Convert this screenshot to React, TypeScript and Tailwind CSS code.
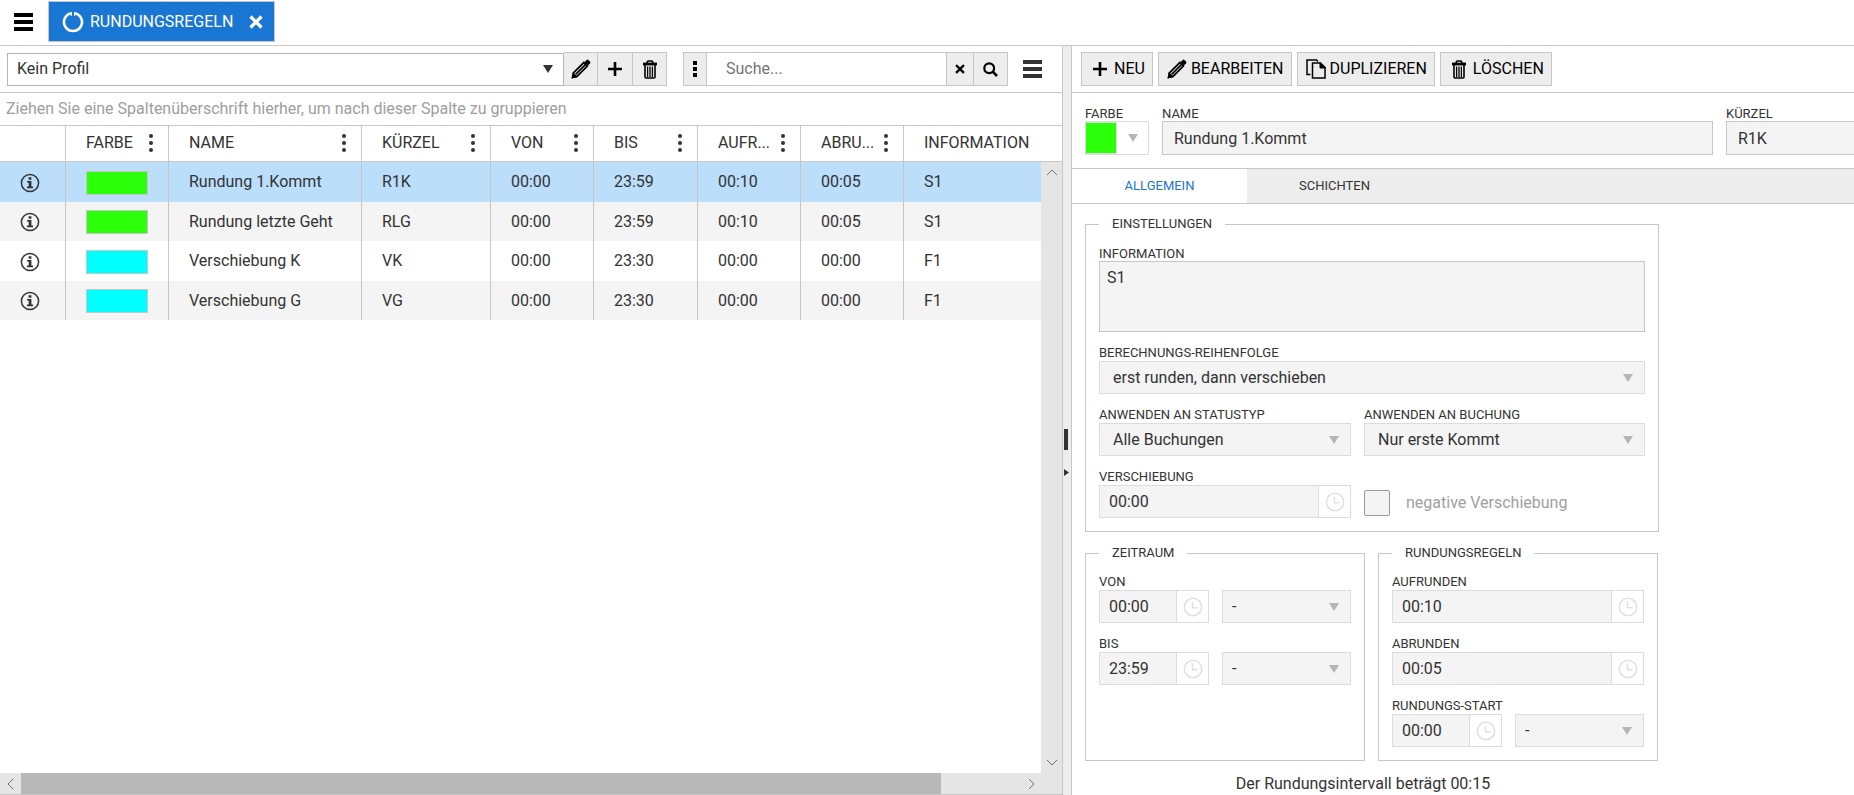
import { useId, useState } from "react";
import type { ReactNode } from "react";

type Rule = {
  color: string;
  name: string;
  short: string;
  from: string;
  to: string;
  up: string;
  down: string;
  info: string;
};

const RULES: Rule[] = [
  { color: "#2bff0a", name: "Rundung 1.Kommt", short: "R1K", from: "00:00", to: "23:59", up: "00:10", down: "00:05", info: "S1" },
  { color: "#2bff0a", name: "Rundung letzte Geht", short: "RLG", from: "00:00", to: "23:59", up: "00:10", down: "00:05", info: "S1" },
  { color: "#00ffff", name: "Verschiebung K", short: "VK", from: "00:00", to: "23:30", up: "00:00", down: "00:00", info: "F1" },
  { color: "#00ffff", name: "Verschiebung G", short: "VG", from: "00:00", to: "23:30", up: "00:00", down: "00:00", info: "F1" },
];

const COLUMNS = [
  { label: "FARBE", width: "w-[103px]" },
  { label: "NAME", width: "w-[193px]" },
  { label: "KÜRZEL", width: "w-[129px]" },
  { label: "VON", width: "w-[103px]" },
  { label: "BIS", width: "w-[104px]" },
  { label: "AUFR...", width: "w-[103px]" },
  { label: "ABRU...", width: "w-[103px]" },
];

const BarsIcon = () => (
  <svg width="19" height="18" viewBox="0 0 19 18" fill="currentColor" aria-hidden="true">
    <path d="M0 0h19v4H0zM0 7h19v4H0zM0 14h19v4H0z" />
  </svg>
);

const RingIcon = () => (
  <svg width="22" height="22" viewBox="0 0 22 22" fill="none" stroke="currentColor" strokeWidth="2.6" aria-hidden="true">
    <path d="M9.4 2.2a9 9 0 1 0 3.2 0" />
    <path d="M9.4 1v4M12.6 1v4" strokeWidth="1" />
  </svg>
);

const CrossIcon = ({ size }: { size: number }) => (
  <svg width={size} height={size} viewBox="0 0 14 14" stroke="currentColor" strokeWidth="3.2" aria-hidden="true">
    <path d="M1.500 1.500l11 11M12.500 1.500l-11 11" />
  </svg>
);

const PencilIcon = () => (
  <svg width="20" height="20" viewBox="0 0 20 20" fill="none" stroke="currentColor" aria-hidden="true">
    <path d="M2.4 13.800L12.800 3.600l3.500 3.500L6 17.400l-4.400 1z" strokeWidth="1.800" />
    <path d="M4.600 15.400L14.400 5.600" strokeWidth="1.600" />
    <path d="M.6 19.400l1.400-6.200 4.800 4.800z" fill="currentColor" stroke="none" />
    <path d="M13.400 3.200L15.600 1a1.300 1.300 0 0 1 1.800 0L19 2.600a1.300 1.300 0 0 1 0 1.800l-2.200 2.200z" fill="currentColor" stroke="none" />
  </svg>
);

const PlusIcon = () => (
  <svg width="14" height="14" viewBox="0 0 14 14" stroke="currentColor" strokeWidth="2.600" aria-hidden="true">
    <path d="M7 0v14M0 7h14" />
  </svg>
);

const TrashIcon = () => (
  <svg width="14" height="19" viewBox="0 0 14 19" fill="none" stroke="currentColor" aria-hidden="true">
    <path d="M4.200 3V2.200a1.200 1.200 0 0 1 1.200-1.200h3.200a1.200 1.200 0 0 1 1.200 1.200V3" strokeWidth="1.600" />
    <path d="M0 4h14" strokeWidth="2.800" />
    <path d="M2 5v12a1 1 0 0 0 1 1h8a1 1 0 0 0 1-1V5" strokeWidth="1.600" />
    <path d="M4.600 6.500V17M7 6.500V17M9.400 6.500V17" strokeWidth="1.300" />
  </svg>
);

const CopyIcon = () => (
  <svg width="20" height="20" viewBox="0 0 20 20" fill="none" stroke="currentColor" strokeWidth="1.500" aria-hidden="true">
    <path d="M4.500 15.500H1V1h9.500l1.500 1.500" />
    <path d="M6.500 4h8L19 8.500V19H6.500z" />
    <path d="M14 3.500v5.500h5.500z" fill="currentColor" strokeWidth="1" />
  </svg>
);

const SearchIcon = () => (
  <svg width="15" height="15" viewBox="0 0 15 15" fill="none" stroke="currentColor" aria-hidden="true">
    <circle cx="6.200" cy="6.200" r="4.900" strokeWidth="2.200" />
    <path d="M9.700 9.700l4.300 4.300" strokeWidth="2.600" />
  </svg>
);

const DotsIcon = () => (
  <svg width="4" height="18" viewBox="0 0 4 18" fill="currentColor" aria-hidden="true">
    <circle cx="2" cy="2" r="2" />
    <circle cx="2" cy="9" r="2" />
    <circle cx="2" cy="16" r="2" />
  </svg>
);

const SquareDotsIcon = () => (
  <svg width="4" height="16" viewBox="0 0 4 16" fill="currentColor" aria-hidden="true">
    <path d="M0 0h4v4H0zM0 6h4v4H0zM0 12h4v4H0z" />
  </svg>
);

const InfoIcon = () => (
  <svg width="20" height="20" viewBox="0 0 20 20" fill="none" aria-hidden="true">
    <circle cx="10" cy="10" r="8.600" stroke="currentColor" strokeWidth="1.500" />
    <path d="M8.600 4.200h2.800v2.600H8.600zM7 8h4.400v5.600H13V15.200H7V13.600h1.700V9.500H7z" fill="currentColor" />
  </svg>
);

const ClockIcon = () => (
  <svg width="20" height="20" viewBox="0 0 20 20" fill="none" stroke="currentColor" strokeWidth="1.500" aria-hidden="true">
    <circle cx="10" cy="10" r="8.700" />
    <path d="M9.500 4.500v6.200h5" />
  </svg>
);

const DownIcon = () => (
  <svg width="10" height="8" viewBox="0 0 10 8" fill="currentColor" aria-hidden="true">
    <path d="M0 0h10L5 8z" />
  </svg>
);

function Chevron({ d }: { d: string }) {
  return (
    <svg width="12" height="12" viewBox="0 0 12 12" fill="none" stroke="#707070" strokeWidth="1" aria-hidden="true">
      <path d={d} />
    </svg>
  );
}

function ToolButton({ label, icon, onClick }: { label: string; icon: ReactNode; onClick?: () => void }) {
  return (
    <button type="button" onClick={onClick} className="flex h-[34px] items-center gap-1 border border-[#c6c6c6] bg-[#ededed] pr-[7px] pl-2 text-black">
      <span className="flex w-5 justify-center">{icon}</span>
      {label}
    </button>
  );
}

function Field({ label, id, className = "", children }: { label: string; id: string; className?: string; children: ReactNode }) {
  return (
    <div className={className}>
      <label htmlFor={id} className="block text-[13px] leading-[14px] whitespace-nowrap">{label}</label>
      {children}
    </div>
  );
}

function Dropdown({ id, options, label, className = "pl-[13px]" }: { id?: string; options: string[]; label?: string; className?: string }) {
  return (
    <div className="relative mt-px flex-1">
      <select id={id} aria-label={label} className={`block h-[33px] w-full appearance-none border border-[#dcdcdc] bg-[#f4f4f4] pr-8 ${className}`}>
        {options.map((o) => (
          <option key={o}>{o}</option>
        ))}
      </select>
      <span className="pointer-events-none absolute inset-y-0 right-3 flex items-center text-[#b5b5b5]">
        <DownIcon />
      </span>
    </div>
  );
}

function TimeInput({ id, value, className = "w-full" }: { id: string; value: string; className?: string }) {
  return (
    <div className={`mt-px flex h-[33px] shrink-0 border border-[#dcdcdc] ${className}`}>
      <input id={id} defaultValue={value} className="min-w-0 flex-1 bg-[#f4f4f4] pl-[9px]" />
      <button type="button" aria-label="Uhrzeit wählen" className="flex w-8 items-center justify-center border-l border-[#dcdcdc] bg-white text-[#e0e0e0]">
        <ClockIcon />
      </button>
    </div>
  );
}

function TimeField({ label, value }: { label: string; value: string }) {
  const id = useId();
  return (
    <Field label={label} id={id}>
      <TimeInput id={id} value={value} />
    </Field>
  );
}

function TimeWithDay({ label, value }: { label: string; value: string }) {
  const id = useId();
  return (
    <Field label={label} id={id}>
      <div className="flex gap-[13px]">
        <TimeInput id={id} value={value} className="w-[110px]" />
        <Dropdown label={`${label} Tag`} options={["-"]} className="pl-[9px]" />
      </div>
    </Field>
  );
}

function Group({ title, className = "pt-[13px]", children }: { title: string; className?: string; children: ReactNode }) {
  return (
    <fieldset className={`border border-[#c6c6c6] px-[13px] pb-[13px] ${className}`}>
      <legend className="px-[13px] text-[13px] leading-5">{title}</legend>
      <div className="flex flex-col gap-3.5">{children}</div>
    </fieldset>
  );
}

function ListToolbar() {
  return (
    <div className="flex h-[47px] shrink-0 items-center border-b border-[#c6c6c6] pl-[7px] text-black">
      <div className="relative flex-1">
        <select aria-label="Profil" className="block h-[33px] w-full appearance-none border border-[#b5b5b5] bg-white pl-[9px] text-[#333]">
          <option>Kein Profil</option>
        </select>
        <span className="pointer-events-none absolute inset-y-0 right-[11px] flex items-center text-[#333]">
          <DownIcon />
        </span>
      </div>
      <div className="flex h-[34px] divide-x divide-[#c6c6c6] border border-l-0 border-[#c6c6c6] bg-[#ededed]">
        <button type="button" aria-label="Profil bearbeiten" className="flex w-[34px] items-center justify-center"><PencilIcon /></button>
        <button type="button" aria-label="Profil anlegen" className="flex w-[35px] items-center justify-center"><PlusIcon /></button>
        <button type="button" aria-label="Profil löschen" className="flex w-[33px] items-center justify-center"><TrashIcon /></button>
      </div>
      <div className="ml-4 flex h-[34px] divide-x divide-[#c6c6c6] border border-[#c6c6c6] bg-[#ededed]">
        <button type="button" aria-label="Suchoptionen" className="flex w-[23px] items-center justify-center"><SquareDotsIcon /></button>
        <input aria-label="Suche" placeholder="Suche..." className="w-60 bg-white pl-[19px] placeholder:text-[#757575]" />
        <button type="button" aria-label="Suche leeren" className="flex w-[27px] items-center justify-center"><CrossIcon size={10} /></button>
        <button type="button" aria-label="Suchen" className="flex w-[33px] items-center justify-center"><SearchIcon /></button>
      </div>
      <button type="button" aria-label="Listenmenü" className="mr-5 ml-[15px] text-[#333]"><BarsIcon /></button>
    </div>
  );
}

function RuleTable() {
  const [selected, setSelected] = useState(0);
  return (
    <table className="h-[194px] w-full table-fixed border-separate border-spacing-0 text-left">
      <thead>
        <tr className="h-9">
          <th className="w-[66px] border-r border-b border-[#c6c6c6]" />
          {COLUMNS.map((c) => (
            <th key={c.label} className={`border-r border-b border-[#c6c6c6] pr-[15px] pb-0.5 pl-5 font-normal ${c.width}`}>
              <div className="flex items-center justify-between">
                {c.label}
                <button type="button" aria-label={`${c.label} Menü`}><DotsIcon /></button>
              </div>
            </th>
          ))}
          <th className="border-b border-[#c6c6c6] pb-0.5 pl-5 font-normal">INFORMATION</th>
        </tr>
      </thead>
      <tbody>
        {RULES.map((r, i) => (
          <tr
            key={r.name}
            onClick={() => setSelected(i)}
            className={i === selected ? "bg-[#bbdefb]" : i % 2 ? "bg-[#f4f4f4]" : "bg-white"}
          >
            <td className="border-r border-[#c6c6c6] pt-0.5 pl-5"><InfoIcon /></td>
            <td className="border-r border-[#c6c6c6] pt-0.5 pl-5">
              <div className="h-6 w-[62px] border border-[#c6c6c6]" style={{ backgroundColor: r.color }} />
            </td>
            {[r.name, r.short, r.from, r.to, r.up, r.down].map((v, k) => (
              <td key={k} className="border-r border-[#c6c6c6] pt-px pl-5 whitespace-nowrap">{v}</td>
            ))}
            <td className="pt-px pl-5">{r.info}</td>
          </tr>
        ))}
      </tbody>
    </table>
  );
}

function ListPanel() {
  return (
    <section className="flex min-h-0 flex-col border-r border-b border-[#c6c6c6]">
      <ListToolbar />
      <p className="h-[33px] shrink-0 border-b border-[#c6c6c6] pl-1.5 leading-8 text-[#9e9e9e]">
        Ziehen Sie eine Spaltenüberschrift hierher, um nach dieser Spalte zu gruppieren
      </p>
      <div className="relative min-h-0 flex-1">
        <RuleTable />
        {/* vertical scroll track, lies over the last column below the header */}
        <div className="absolute top-9 right-0 bottom-0 flex w-[21px] flex-col items-center justify-between bg-[#e5e5e5] py-1">
          <Chevron d="M1 9l5-5 5 5" />
          <Chevron d="M1 3l5 5 5-5" />
        </div>
      </div>
      <div className="flex h-[21px] shrink-0 items-center bg-[#e5e5e5]">
        <span className="flex w-[21px] justify-center"><Chevron d="M8 1L3 6l5 5" /></span>
        <div className="h-full w-13/15 bg-[#b8b8b8]" />
        <span className="mr-[25px] ml-auto"><Chevron d="M4 1l5 5-5 5" /></span>
      </div>
    </section>
  );
}

function Splitter() {
  return (
    <div className="flex flex-col items-start justify-center gap-[19px] bg-[#ededed] pt-16 pl-px text-[#333]">
      <div className="h-[21px] w-1 bg-[#333]" />
      <svg width="5" height="7" viewBox="0 0 5 7" fill="currentColor" aria-hidden="true">
        <path d="M0 0l5 3.500L0 7z" />
      </svg>
    </div>
  );
}

function DetailPanel() {
  const [tab, setTab] = useState("ALLGEMEIN");
  return (
    <section className="min-h-0 overflow-hidden border-l border-[#c6c6c6]">
      <div className="flex h-[47px] items-center gap-[5px] border-b border-[#c6c6c6] pl-[9px]">
        <ToolButton label="NEU" icon={<PlusIcon />} />
        <ToolButton label="BEARBEITEN" icon={<PencilIcon />} />
        <ToolButton label="DUPLIZIEREN" icon={<CopyIcon />} />
        <ToolButton label="LÖSCHEN" icon={<TrashIcon />} />
      </div>

      <div className="flex gap-[13px] pt-3.5 pb-[13px] pl-[13px]">
        <Field label="FARBE" id="color" className="w-16 shrink-0">
          <button id="color" type="button" className="flex h-[34px] w-full border border-[#dcdcdc] bg-white">
            <span className="h-full w-[31px] border-y border-r border-[#dcdcdc] bg-[#2bff0a]" />
            <span className="flex h-full flex-1 items-center justify-center text-[#b5b5b5]"><DownIcon /></span>
          </button>
        </Field>
        <Field label="NAME" id="name" className="w-[551px] shrink-0">
          <input id="name" defaultValue="Rundung 1.Kommt" className="block h-[34px] w-full border border-[#c6c6c6] bg-[#f4f4f4] pl-[11px]" />
        </Field>
        <Field label="KÜRZEL" id="short" className="w-48 shrink-0">
          <input id="short" defaultValue="R1K" className="block h-[34px] w-full border border-[#c6c6c6] bg-[#f4f4f4] pl-[11px]" />
        </Field>
      </div>

      <div role="tablist" className="flex h-9 border-y border-[#c6c6c6] bg-[#ededed] text-[13px]">
        {["ALLGEMEIN", "SCHICHTEN"].map((t) => (
          <button
            key={t}
            type="button"
            role="tab"
            aria-selected={t === tab}
            onClick={() => setTab(t)}
            className={`w-[175px] ${t === tab ? "bg-white text-[#1976d2]" : ""}`}
          >
            {t}
          </button>
        ))}
      </div>

      <form className="ml-[13px] flex max-w-[574px] flex-col gap-[11px] pt-[10px]">
        <Group title="EINSTELLUNGEN">
          <Field label="INFORMATION" id="info">
            <textarea id="info" defaultValue="S1" className="block h-[71px] w-full resize-none border border-[#c6c6c6] bg-[#f4f4f4] px-[7px] py-1" />
          </Field>
          <Field label="BERECHNUNGS-REIHENFOLGE" id="order">
            <Dropdown id="order" options={["erst runden, dann verschieben"]} />
          </Field>
          <div className="flex gap-[13px]">
            <Field label="ANWENDEN AN STATUSTYP" id="status" className="w-[252px]">
              <Dropdown id="status" options={["Alle Buchungen"]} />
            </Field>
            <Field label="ANWENDEN AN BUCHUNG" id="booking" className="flex-1">
              <Dropdown id="booking" options={["Nur erste Kommt"]} />
            </Field>
          </div>
          <div className="flex items-end gap-[13px]">
            <div className="w-[252px]">
              <TimeField label="VERSCHIEBUNG" value="00:00" />
            </div>
            <label className="flex h-[31px] items-center gap-4 text-[#a0a0a0]">
              <input type="checkbox" className="size-[26px] appearance-none rounded-xs border border-[#999] bg-[#f4f4f4] checked:bg-[#1976d2]" />
              negative Verschiebung
            </label>
          </div>
        </Group>

        <div className="flex gap-[13px]">
          <Group title="ZEITRAUM" className="w-[280px] pt-3">
            <TimeWithDay label="VON" value="00:00" />
            <TimeWithDay label="BIS" value="23:59" />
          </Group>
          <Group title="RUNDUNGSREGELN" className="w-[280px] pt-3">
            <TimeField label="AUFRUNDEN" value="00:10" />
            <TimeField label="ABRUNDEN" value="00:05" />
            <TimeWithDay label="RUNDUNGS-START" value="00:00" />
          </Group>
        </div>
        <p className="pr-[18px] text-center leading-6">Der Rundungsintervall beträgt 00:15</p>
      </form>
    </section>
  );
}

export default function App() {
  return (
    <div className="flex h-screen flex-col overflow-hidden bg-white font-['Roboto',sans-serif] text-base text-[#333]">
      <header className="flex h-[46px] shrink-0 items-start border-b border-[#c6c6c6] pt-px pl-3.5">
        <button type="button" aria-label="Menü" className="mt-3 mr-[15px] text-black"><BarsIcon /></button>
        <div className="flex h-[41px] items-center border border-[#c6c6c6] bg-[#1976d2] pr-[11px] pl-[13px] text-white">
          <RingIcon />
          <span className="mr-4 ml-1.5">RUNDUNGSREGELN</span>
          <button type="button" aria-label="Tab schließen"><CrossIcon size={14} /></button>
        </div>
      </header>
      <main className="grid min-h-0 flex-1 grid-cols-[minmax(0,1063fr)_8px_minmax(0,783fr)]">
        <ListPanel />
        <Splitter />
        <DetailPanel />
      </main>
    </div>
  );
}
